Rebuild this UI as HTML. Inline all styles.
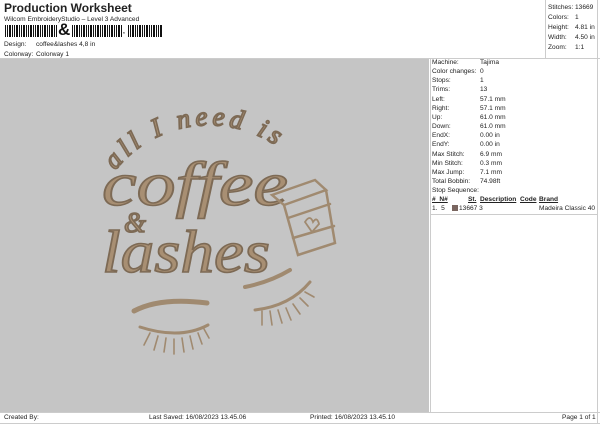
<!DOCTYPE html>
<html><head><meta charset="utf-8"><style>
*{margin:0;padding:0;box-sizing:border-box}
body{width:600px;height:424px;background:#fff;font-family:"Liberation Sans",sans-serif;color:#222;position:relative;overflow:hidden;font-size:6.6px}
.a{position:absolute;white-space:nowrap}
.t{font-weight:bold;font-size:12px;left:4px;top:1px}
.canvas{position:absolute;left:0;top:59px;width:429px;height:353px;background:#c5c5c5}
.bc{position:absolute;left:5px;top:25px;height:12px;width:250px;background:repeating-linear-gradient(90deg,#111 0 1px,#fff 1px 2px,#111 2px 3px,#fff 3px 4px,#111 4px 6px,#fff 6px 7px)}
</style></head><body>
<div class="a t">Production Worksheet</div>
<div class="a" style="left:4px;top:16px">Wilcom EmbroideryStudio – Level 3 Advanced</div>
<div class="bc" style="width:53px"></div>
<div class="a" style="left:58px;top:20px;font-size:17px;font-weight:bold;color:#111">&amp;</div>
<div class="bc" style="left:72px;width:50px"></div>
<div class="a" style="left:123px;top:28px;font-weight:bold">,</div>
<div class="bc" style="left:128px;width:35px"></div>
<div class="a" style="left:4px;top:41px">Design:</div><div class="a" style="left:36px;top:41px">coffee&amp;lashes 4,8 in</div>
<div class="a" style="left:4px;top:51px">Colorway:</div><div class="a" style="left:36px;top:51px">Colorway 1</div>
<div class="a" style="left:0;top:58px;width:600px;border-top:1px solid #ccc"></div>
<div class="a" style="left:545px;top:0;height:58px;border-left:1px solid #ccc"></div>
<div class="a" style="left:597px;top:0;height:424px;border-left:1px solid #ccc"></div>
<div class="a" style="left:548px;top:3px;line-height:10px">Stitches:<br>Colors:<br>Height:<br>Width:<br>Zoom:</div>
<div class="a" style="left:575px;top:3px;line-height:10px">13669<br>1<br>4.81 in<br>4.50 in<br>1:1</div>
<div class="canvas"></div>
<div class="a" style="left:430px;top:59px;height:353px;border-left:1px solid #ccc"></div>
<div class="a" style="left:432px;top:58px;line-height:9.15px">Machine:<br>Color changes:<br>Stops:<br>Trims:<br>Left:<br>Right:<br>Up:<br>Down:<br>EndX:<br>EndY:<br>Max Stitch:<br>Min Stitch:<br>Max Jump:<br>Total Bobbin:<br>Stop Sequence:</div>
<div class="a" style="left:480px;top:58px;line-height:9.15px">Tajima<br>0<br>1<br>13<br>57.1 mm<br>57.1 mm<br>61.0 mm<br>61.0 mm<br>0.00 in<br>0.00 in<br>6.9 mm<br>0.3 mm<br>7.1 mm<br>74.98ft</div>
<div class="a" style="left:432px;top:196px;font-weight:bold;text-decoration:underline">#&nbsp;&nbsp;N#</div>
<div class="a" style="left:468px;top:196px;font-weight:bold;text-decoration:underline">St.</div>
<div class="a" style="left:480px;top:196px;font-weight:bold;text-decoration:underline">Description</div>
<div class="a" style="left:520px;top:196px;font-weight:bold;text-decoration:underline">Code</div>
<div class="a" style="left:539px;top:196px;font-weight:bold;text-decoration:underline">Brand</div>
<div class="a" style="left:432px;top:205px">1.&nbsp;&nbsp;5</div>
<div class="a" style="left:452px;top:205px;width:6px;height:6px;background:#7a6660"></div>
<div class="a" style="left:459px;top:205px">13667 3</div>
<div class="a" style="left:539px;top:205px">Madeira Classic 40</div>
<div class="a" style="left:430px;top:214px;width:168px;border-top:1px solid #ccc"></div>
<div class="a" style="left:0;top:412px;width:600px;border-top:1px solid #ccc"></div>
<div class="a" style="left:0;top:423px;width:600px;border-top:1px solid #ccc"></div>
<div class="a" style="left:4px;top:414px">Created By:</div>
<div class="a" style="left:149px;top:414px">Last Saved: 16/08/2023 13.45.06</div>
<div class="a" style="left:310px;top:414px">Printed: 16/08/2023 13.45.10</div>
<div class="a" style="left:562px;top:414px">Page 1 of 1</div>
<svg class="a" style="left:0;top:0" width="430" height="412" viewBox="0 0 430 412">
<g fill="#a88f73" stroke="#7d6a55" stroke-width="1.6" font-family="Liberation Serif" font-style="italic">
<defs><path id="arc" d="M114,172 A120,120 0 0 1 282,150"/></defs>
<text font-size="27"><textPath href="#arc" startOffset="2" textLength="178" lengthAdjust="spacing">all I need is</textPath></text>
<text x="102" y="205" font-size="62" textLength="186" lengthAdjust="spacingAndGlyphs">coffee</text>
<text x="124" y="232" font-size="28">&amp;</text>
<text x="102" y="272" font-size="60" textLength="168" lengthAdjust="spacingAndGlyphs">lashes</text>
</g>
<g fill="none" stroke="#a08a70" stroke-width="2.5" stroke-linecap="round">
<path d="M272,195 L315,180 L326,190 L284,205 Z"/>
<path d="M284,205 L298,255 L335,243 L326,190"/>
<path d="M288,218 L330,204 M293,238 L334,226"/>
<path d="M305,222 q5,-8 8,0 q4,-6 6,2 l-7,8 z" stroke-width="1.8"/>
<path d="M245,287 Q270,282 290,270" stroke-width="4"/>
<path d="M134,311 Q160,297 207,303" stroke-width="5"/>
<path d="M140,327 Q180,340 208,325" stroke-width="3"/>
<path d="M150,333 l-6,12 M158,336 l-4,14 M166,338 l-2,14 M174,339 l0,15 M182,338 l2,14 M190,336 l3,13 M198,333 l4,11 M204,329 l5,9" stroke-width="1.6"/>
<path d="M255,310 Q290,306 310,282" stroke-width="3"/>
<path d="M262,311 l0,14 M270,311 l2,14 M278,310 l4,13 M286,308 l5,12 M293,304 l7,10 M300,298 l8,8 M305,292 l9,5" stroke-width="1.6"/>
</g>
</svg>
</body></html>
